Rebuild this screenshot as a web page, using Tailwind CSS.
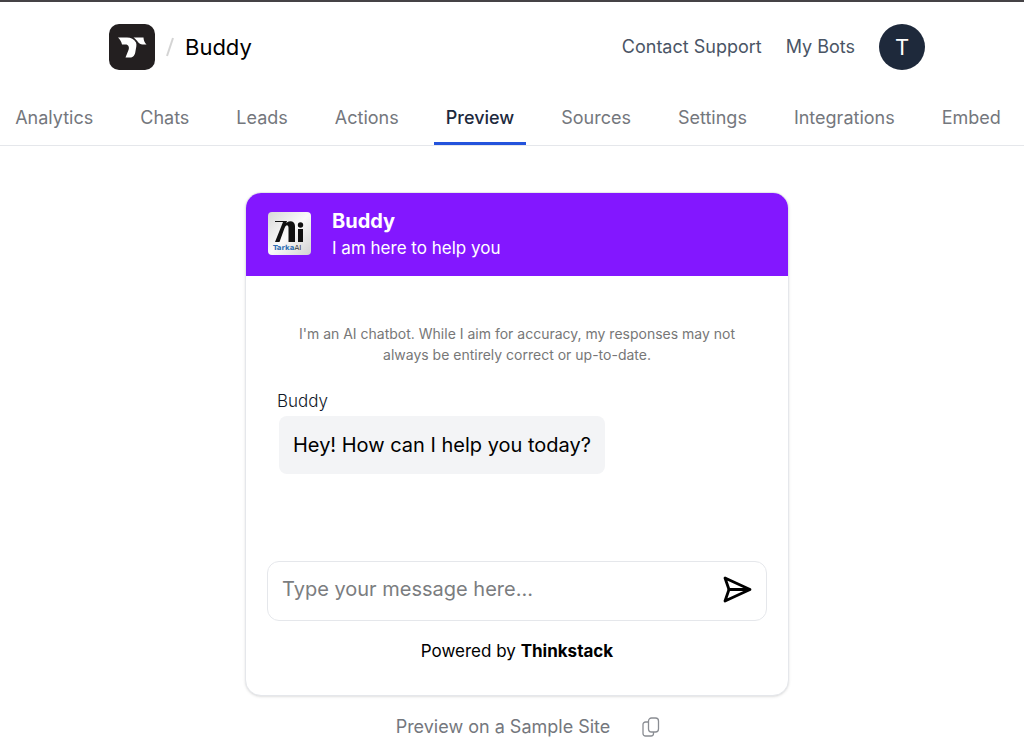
<!DOCTYPE html>
<html lang="en">
<head>
    <meta charset="UTF-8">
    <meta name="viewport" content="width=device-width, initial-scale=1.0">
    <title>Buddy - Preview</title>
    <script src="https://cdn.jsdelivr.net/npm/@tailwindcss/browser@4"></script>
</head>
<body class="min-h-screen overflow-x-hidden border-t-2 border-[#454346] bg-white font-['Inter',sans-serif] text-black">
    <!-- Top bar -->
    <header class="pl-[10px]">
        <div class="mx-auto flex h-[90px] max-w-[816px] items-center justify-between">
            <div class="flex items-center">
                <a href="#" aria-label="Home">
                    <svg class="size-[46px]" viewBox="0 0 46 46">
                        <rect width="46" height="46" rx="10" fill="#231f20"/>
                        <path d="M9 13.500H18C22 13.500 25 15 27 18.500C28 21 27 24 26.500 27C26 31 24.500 33.500 21 33.500H16.500L19.500 26C20.500 23 19.500 20.500 16.500 20.500H13C12.500 17.500 11 15.500 9 13.500Z" fill="#fff"/>
                        <path d="M24.500 13.500H34.500C34.500 16 35.500 18.500 37.500 20.500H33.500C29.500 20.500 28.500 16 24.500 13.500Z" fill="#fff"/>
                    </svg>
                </a>
                <svg class="ml-[7px] h-6 w-4" viewBox="0 0 16 24" fill="none" stroke="#d4d4d4" stroke-width="2"><path d="M11 3L5 21"/></svg>
                <span class="ml-[7px] text-[22px] leading-8">Buddy</span>
            </div>
            <nav class="flex items-center gap-6 text-[18px] leading-7 text-gray-600">
                <a href="#">Contact Support</a>
                <a href="#">My Bots</a>
                <button type="button" class="size-[46px] rounded-full bg-[#1e293b] text-[22px] text-white">T</button>
            </nav>
        </div>
    </header>

    <!-- Tabs -->
    <nav class="flex h-[54px] justify-center gap-[23px] border-b border-gray-200 pr-2 text-[18px] whitespace-nowrap text-[#74777d]">
        <a href="#" class="px-3 pt-3">Analytics</a>
        <a href="#" class="px-3 pt-3">Chats</a>
        <a href="#" class="px-3 pt-3">Leads</a>
        <a href="#" class="px-3 pt-3">Actions</a>
        <a href="#" class="border-b-3 border-[#2453dc] px-3 pt-3 font-medium text-slate-800">Preview</a>
        <a href="#" class="px-3 pt-3">Sources</a>
        <a href="#" class="px-3 pt-3">Settings</a>
        <a href="#" class="px-3 pt-3">Integrations</a>
        <a href="#" class="px-3 pt-3">Embed</a>
    </nav>

    <main class="pt-[46px] pl-[10px]">
        <!-- Chat widget -->
        <section class="mx-auto max-w-[544px] overflow-hidden rounded-2xl border border-gray-200 bg-white shadow">
            <div class="flex h-[83px] items-center gap-[21px] bg-[#8317ff] px-[22px] pb-[2px] text-white">
                <svg class="size-[43px]" viewBox="0 0 43 43">
                    <defs>
                        <linearGradient id="tile" x1="0" y1="0" x2="1" y2="1">
                            <stop offset="0" stop-color="#d8d8d8"/>
                            <stop offset="0.5" stop-color="#fafafa"/>
                            <stop offset="1" stop-color="#d2d2d2"/>
                        </linearGradient>
                    </defs>
                    <rect width="43" height="43" rx="4" fill="url(#tile)"/>
                    <!-- brand mark -->
                    <path d="M7 9H19L18 12L11.500 30H7L15 10H7Z" fill="#111"/>
                    <path d="M16 14C19 7.500 27 8 27 14V30H20.500V16C20.500 12.500 18 12 16.500 16Z" fill="#111"/>
                    <path d="M30 17H35V30H30Z" fill="#111"/>
                    <circle cx="32.500" cy="13" r="2.700" fill="#111"/>
                    <text x="5" y="37.500" font-size="7" font-family="DejaVu Sans" fill="#2f6fb5"><tspan font-weight="bold">Tarka</tspan><tspan fill="#333">AI</tspan></text>
                </svg>
                <div>
                    <h1 class="text-[20px] leading-7 font-bold">Buddy</h1>
                    <p class="text-[17px] leading-[26px]">I am here to help you</p>
                </div>
            </div>

            <div class="px-[21px] pt-[47px]">
                <p class="mx-auto max-w-[460px] text-center text-[14px] leading-[21px] text-[#777777]">I'm an AI chatbot. While I aim for accuracy, my responses may not always be entirely correct or up-to-date.</p>
                <p class="mt-6 pl-[10px] text-[17px] leading-6 font-light text-gray-900">Buddy</p>
                <div class="mt-[3px] ml-3 w-fit rounded-lg bg-gray-100 px-[14px] py-[14px] text-[20px] leading-[30px]">Hey! How can I help you today?</div>

                <form class="mt-[87px] flex h-[60px] items-center rounded-xl border border-gray-200 pr-[14px] pb-1 pl-[14px]">
                    <input type="text" aria-label="Message" placeholder="Type your message here..." class="min-w-0 flex-1 text-[20px] leading-7 outline-none placeholder:text-[#7b7d80]">
                    <button type="submit" aria-label="Send">
                        <svg class="size-[30px]" viewBox="0 0 30 30" fill="none" stroke="#000" stroke-width="2.800" stroke-linejoin="round" stroke-linecap="round">
                            <path d="M3 4L28 15.500L3 27L7 15.500Z"/>
                            <path d="M7 15.500H27"/>
                        </svg>
                    </button>
                </form>

                <p class="mt-[17px] pb-[31px] text-center text-[17px] leading-[26px]">Powered by <a href="#" class="font-bold">Thinkstack</a></p>
            </div>
        </section>

        <div class="mt-[17px] flex items-center justify-center gap-8 pl-[22px] text-[18px] leading-7 text-[#74777d]">
            <a href="#">Preview on a Sample Site</a>
            <button type="button" aria-label="Copy link">
                <svg class="h-5 w-[18px]" viewBox="0 0 18 20" fill="none" stroke="#8a8d93" stroke-width="1.300">
                    <path d="M6 5H3.500A2.500 2.500 0 0 0 1 7.500V16.500A2.500 2.500 0 0 0 3.500 19H9A2.500 2.500 0 0 0 11.500 16.500V15"/>
                    <rect x="6.500" y="1" width="10" height="14" rx="3"/>
                </svg>
            </button>
        </div>
    </main>
</body>
</html>
